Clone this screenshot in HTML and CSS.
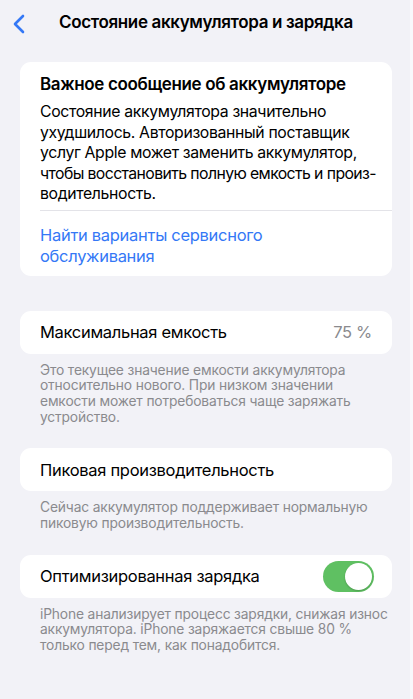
FILE: index.html
```html
<!DOCTYPE html>
<html lang="ru">
<head>
    <meta charset="UTF-8">
    <meta name="viewport" content="width=device-width, initial-scale=1.0">
    <title>Состояние аккумулятора и зарядка</title>
    <link rel="stylesheet" href="styles.css">
</head>
<body>
    <div class="screen">
        <header class="nav-bar">
            <button class="back-btn" aria-label="Назад">
                <svg width="14" height="20" viewBox="0 0 14 20">
                    <path d="M11 2 L3 10 L11 18" fill="none" stroke="#3478f6" stroke-width="2.6" stroke-linecap="round" stroke-linejoin="round"/>
                </svg>
            </button>
            <h1 class="nav-title">Состояние аккумулятора и зарядка</h1>
        </header>

        <section class="card message-card">
            <div class="message-body">
                <h2 class="message-title">Важное сообщение об аккумуляторе</h2>
                <p class="message-text">Состояние аккумулятора значительно ухудшилось. Авторизованный поставщик услуг Apple может заменить аккумулятор, <span class="tight">чтобы восстановить полную емкость и произ-</span> водительность.</p>
            </div>
            <div class="divider"></div>
            <a class="service-link" href="#">Найти варианты сервисного обслуживания</a>
        </section>

        <section class="group">
            <div class="card row">
                <span class="row-label">Максимальная емкость</span>
                <span class="row-value">75 %</span>
            </div>
            <p class="footnote">Это текущее значение емкости аккумулятора относительно нового. При низком значении емкости может потребоваться чаще заряжать устройство.</p>
        </section>

        <section class="group">
            <div class="card row">
                <span class="row-label">Пиковая производительность</span>
            </div>
            <p class="footnote">Сейчас аккумулятор поддерживает нормальную пиковую производительность.</p>
        </section>

        <section class="group">
            <div class="card row">
                <span class="row-label">Оптимизированная зарядка</span>
                <span class="toggle on"><span class="knob"></span></span>
            </div>
            <p class="footnote">iPhone анализирует процесс зарядки, снижая износ аккумулятора. iPhone заряжается свыше 80 % только перед тем, как понадобится.</p>
        </section>
    </div>
</body>
</html>
```

FILE: styles.css
```css
body {
    margin: 0;
    padding: 0;
    background: #f2f2f7;
    font-family: 'Inter', 'Roboto', sans-serif;
    color: #000;
    -webkit-font-smoothing: antialiased;
}

.screen {
    width: 413px;
    min-height: 699px;
    box-sizing: border-box;
    border-right: 3px solid #f8f8fb;
}

.nav-bar {
    height: 44px;
    display: flex;
    align-items: center;
    padding: 0 0 0 12px;
}

.back-btn {
    background: none;
    border: none;
    padding: 0;
    margin: 3px 0 0 0;
    width: 14px;
    height: 20px;
    display: flex;
}

.nav-title {
    margin: 0 0 0 33px;
    font-size: 17px;
    font-weight: 600;
    letter-spacing: -0.35px;
}

.card {
    background: #fff;
    border-radius: 11px;
    margin: 0 18px 0 20px;
}

.message-card {
    margin-top: 18px;
    padding-bottom: 9px;
}

.message-body {
    padding: 11px 16px 5px 20px;
}

.message-title {
    margin: 0 0 7px 0;
    font-size: 17px;
    font-weight: 600;
    letter-spacing: -0.35px;
    line-height: 22px;
}

.message-text {
    margin: 0;
    font-size: 15.8px;
    line-height: 20.5px;
    letter-spacing: -0.35px;
}

.tight {
    white-space: nowrap;
    letter-spacing: -0.6px;
}

.divider {
    height: 1px;
    background: #e3e3e8;
    margin-left: 20px;
}

.service-link {
    display: block;
    padding: 14px 20px 0 20px;
    color: #3478f6;
    text-decoration: none;
    font-size: 16.5px;
    line-height: 21px;
    letter-spacing: -0.3px;
    max-width: 260px;
}

.group {
    margin-top: 35px;
}

.group + .group {
    margin-top: 23px;
}

.row {
    height: 43px;
    display: flex;
    align-items: center;
    justify-content: space-between;
    padding: 0 20px;
}

.row-label {
    font-size: 16.5px;
    letter-spacing: -0.3px;
}

.row-value {
    font-size: 16.5px;
    color: #8a8a8e;
    letter-spacing: -0.3px;
}

.footnote {
    margin: 9px 20px 0 40px;
    font-size: 13.8px;
    line-height: 15.7px;
    color: #8a8a8e;
    letter-spacing: -0.15px;
}

.toggle {
    width: 51px;
    height: 31px;
    border-radius: 16px;
    background: #d9d9dd;
    position: relative;
    margin-right: -2px;
}

.toggle.on {
    background: #5fc062;
}

.knob {
    position: absolute;
    top: 2px;
    right: 2px;
    width: 27px;
    height: 27px;
    border-radius: 50%;
    background: #fff;
    box-shadow: 0 1px 2px rgba(0, 0, 0, 0.2);
}
```
